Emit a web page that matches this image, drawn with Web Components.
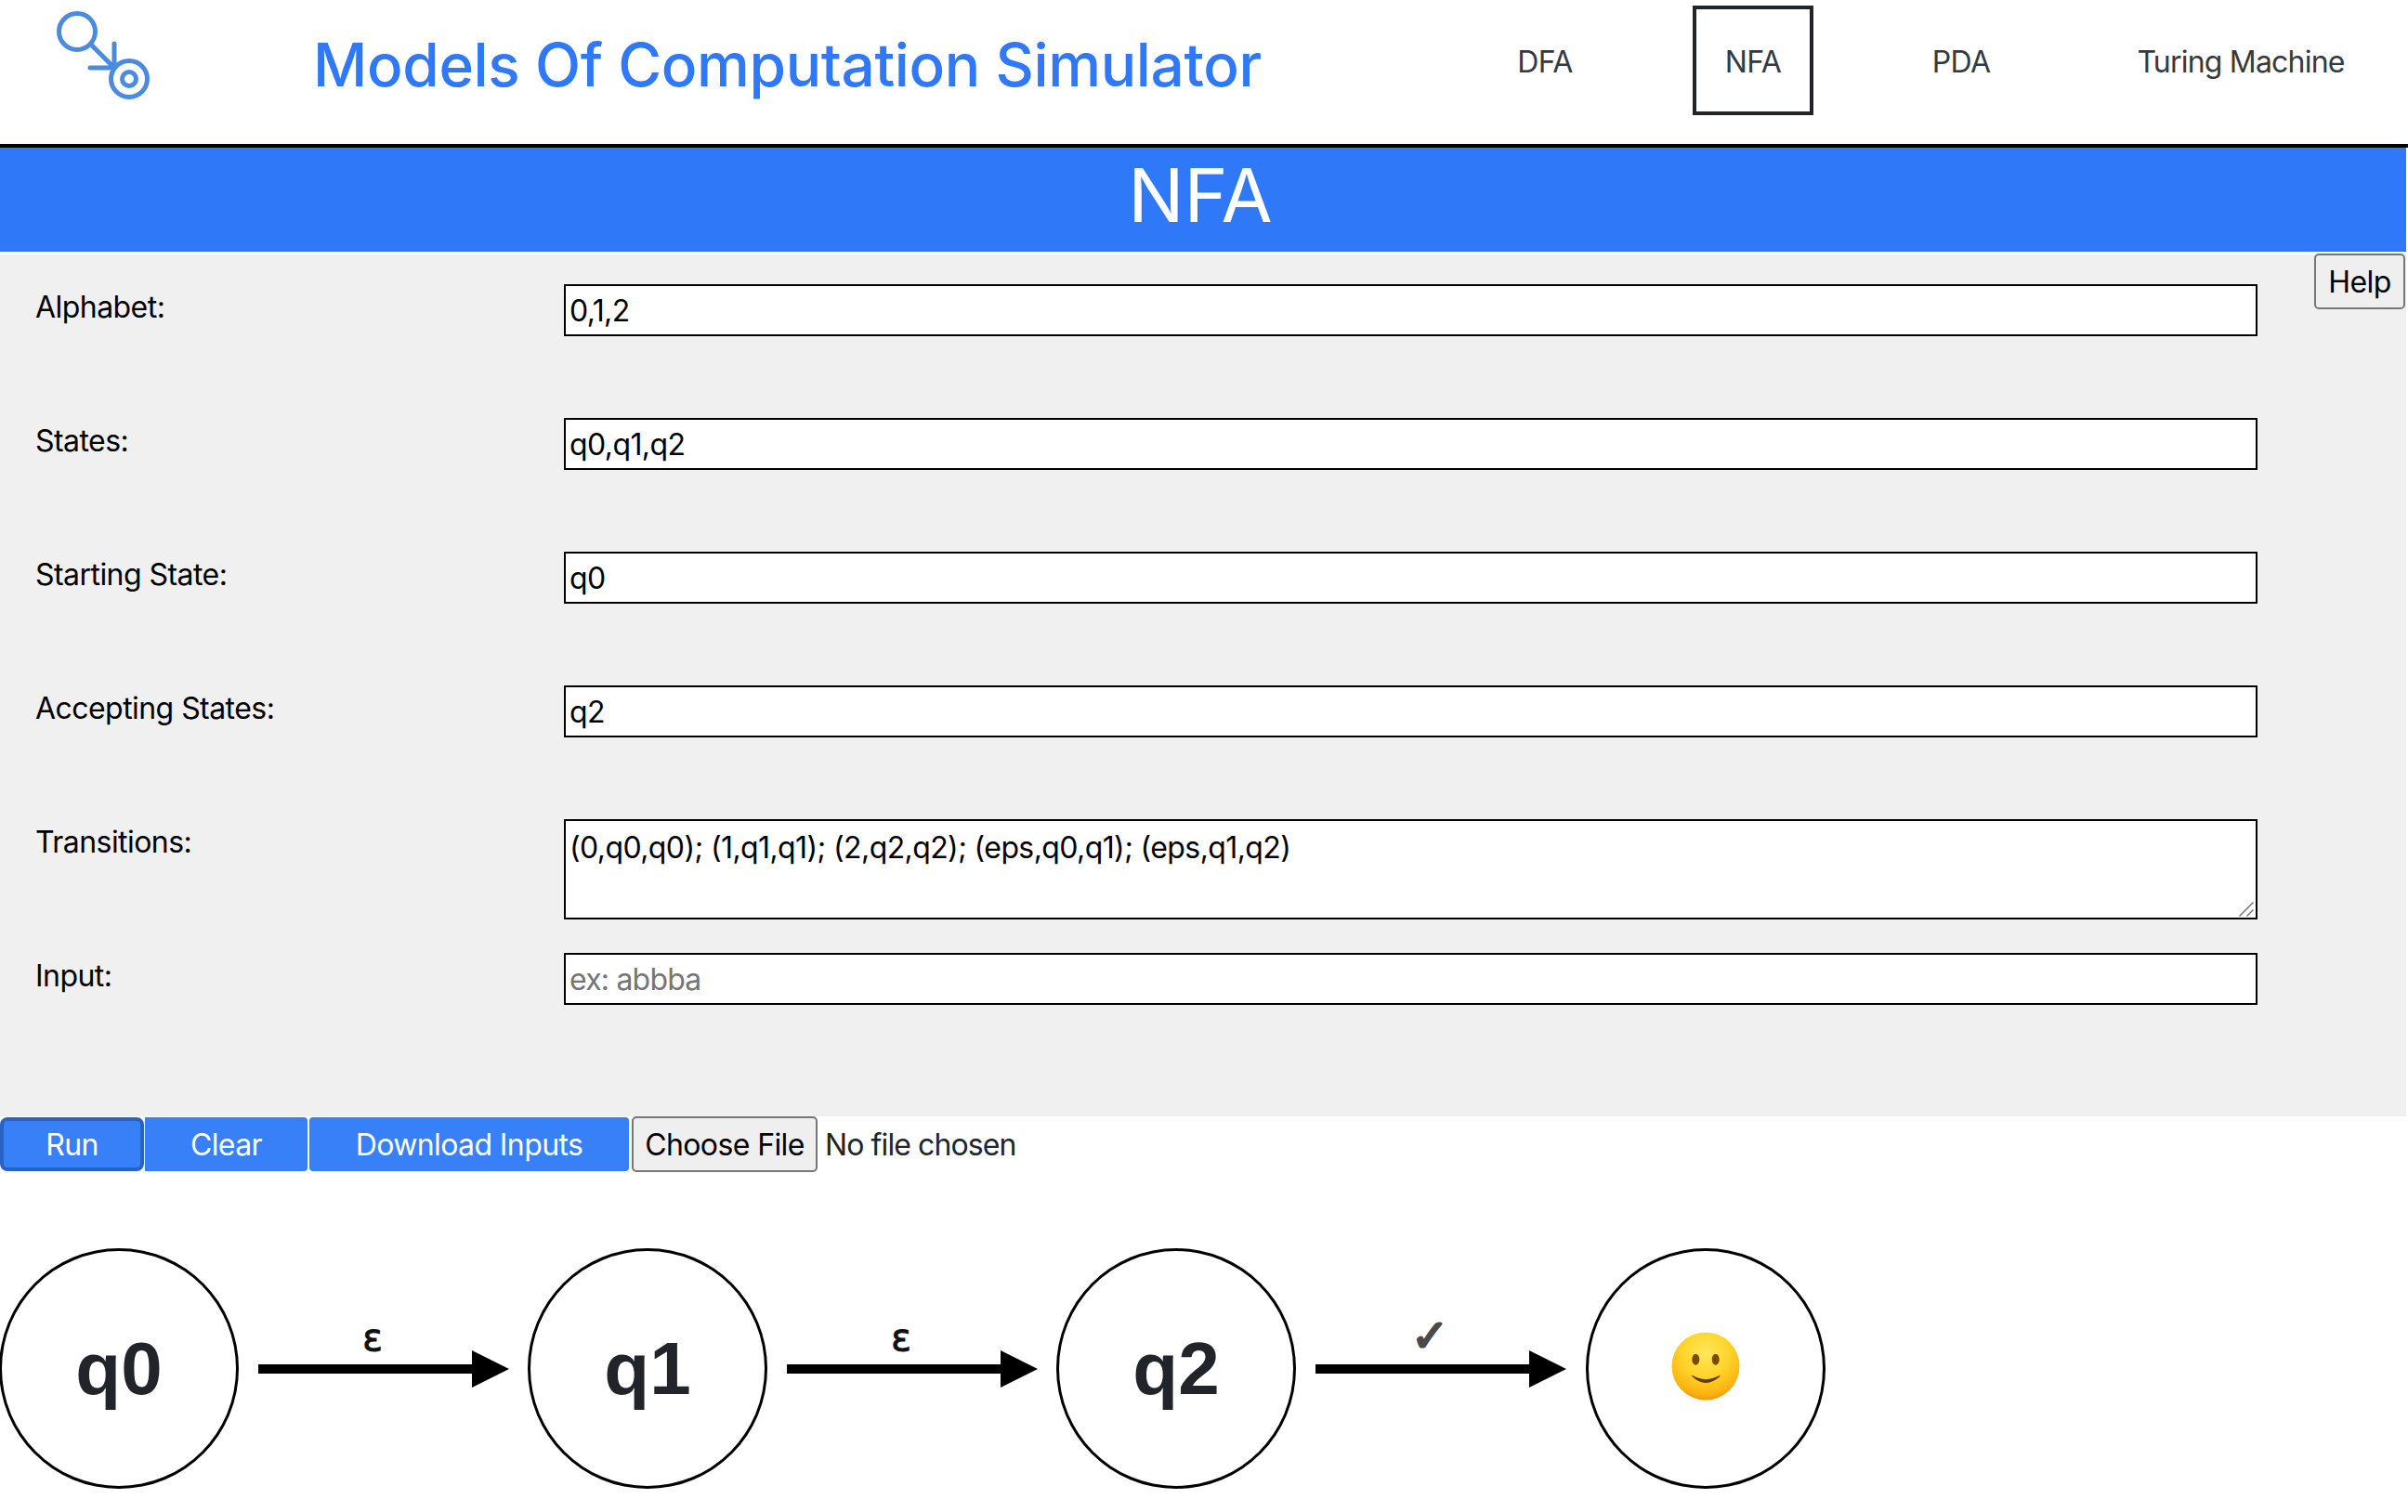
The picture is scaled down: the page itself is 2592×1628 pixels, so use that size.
<!DOCTYPE html>
<html lang="en">
<head>
<meta charset="utf-8">
<title>NFA</title>
<style>
  html, body { margin: 0; background: #fff; overflow: hidden; }
  body { font-family: Inter, "Noto Sans", sans-serif; color: #212529; }
</style>
</head>
<body>
<site-header></site-header>
<page-title>NFA</page-title>
<nfa-form>
  <form-field label="Alphabet:" value="0,1,2"></form-field>
  <form-field label="States:" value="q0,q1,q2"></form-field>
  <form-field label="Starting State:" value="q0"></form-field>
  <form-field label="Accepting States:" value="q2"></form-field>
  <form-field label="Transitions:" multiline value="(0,q0,q0); (1,q1,q1); (2,q2,q2); (eps,q0,q1); (eps,q1,q2)"></form-field>
  <form-field label="Input:" placeholder="ex: abbba"></form-field>
</nfa-form>
<action-bar></action-bar>
<nfa-diagram>
  <state-node>q0</state-node>
  <edge-arrow>ε</edge-arrow>
  <state-node>q1</state-node>
  <edge-arrow>ε</edge-arrow>
  <state-node>q2</state-node>
  <edge-arrow check>✓</edge-arrow>
  <state-node>
    <svg style="margin-bottom:6px" width="74" height="74" viewBox="0 0 74 74">
      <defs>
        <radialGradient id="face" cx="50%" cy="30%" r="75%">
          <stop offset="0" stop-color="#ffe65c"/>
          <stop offset="0.45" stop-color="#ffd52a"/>
          <stop offset="0.8" stop-color="#fdb512"/>
          <stop offset="1" stop-color="#ef8d06"/>
        </radialGradient>
      </defs>
      <circle cx="37" cy="37" r="36.5" fill="url(#face)"/>
      <ellipse cx="26.3" cy="29.7" rx="4" ry="6" fill="#7a4a08"/>
      <ellipse cx="47.7" cy="29.7" rx="4" ry="6" fill="#7a4a08"/>
      <path d="M22.7 47.6Q37 56 52 47.6Q37 61 22.7 47.6z" fill="#5e3a06" stroke="#5e3a06" stroke-width="1.2" stroke-linejoin="round"/>
    </svg>
  </state-node>
</nfa-diagram>

<script>
class SiteHeader extends HTMLElement {
  constructor() {
    super();
    this.attachShadow({ mode: "open" }).innerHTML = `
      <style>
        :host { display: flex; align-items: flex-start; height: 155px; border-bottom: 4px solid #000; }
        svg { flex: none; margin: 12px 0 0 58px; }
        h1 { margin: 32px 0 0 173px; font: 500 64px/1.2 Inter, sans-serif; letter-spacing: -0.4px; color: #2f78f7; white-space: nowrap; }
        nav { margin-left: auto; display: flex; align-items: flex-start; padding-top: 6px; gap: 94px; margin-right: 38px; }
        a { display: flex; flex: none; box-sizing: border-box; width: 130px; height: 118px; padding-top: 37px; justify-content: center;
            font-size: 32px; line-height: 40px; letter-spacing: -0.6px; white-space: nowrap; color: #343a40; text-decoration: none; border: 4px solid transparent; }
        a.active { border-color: #212529; }
        a.wide { width: 284px; letter-spacing: -0.8px; }
      </style>
      <svg width="106" height="98" viewBox="0 0 106 98" fill="none" stroke="#4a8be0" stroke-linecap="round">
        <circle cx="25" cy="22" r="19.5" stroke-width="5"/>
        <path d="M40 36l24 24M39 61h25M65 35v25" stroke-width="5"/>
        <circle cx="81" cy="73" r="19.5" stroke-width="5"/>
        <circle cx="81" cy="73" r="7.5" stroke-width="5"/>
      </svg>
      <h1>Models Of Computation Simulator</h1>
      <nav>
        <a href="#">DFA</a>
        <a href="#" class="active">NFA</a>
        <a href="#">PDA</a>
        <a href="#" class="wide">Turing Machine</a>
      </nav>`;
  }
}
customElements.define("site-header", SiteHeader);

class PageTitle extends HTMLElement {
  constructor() {
    super();
    this.attachShadow({ mode: "open" }).innerHTML = `
      <style>
        :host { display: block; box-sizing: border-box; width: 2590px; height: 112px; margin-bottom: 3px; padding-right: 6px; background: #2f78f7; color: #fff;
                text-align: center; font-size: 80px; line-height: 101px; }
      </style>
      <slot></slot>`;
  }
}
customElements.define("page-title", PageTitle);

const fieldStyle = `
  :host { display: flex; align-items: flex-start; }
  label { flex: none; box-sizing: border-box; width: 607px; padding: 5px 0 0 38px; font-size: 32px; line-height: 40px; letter-spacing: -0.55px; color: #000; }
  .wrap { position: relative; }
  .box { box-sizing: border-box; width: 1823px; height: 56px; margin: 0; padding: 0 4px; border: 2px solid #000;
         border-radius: 0; background: #fff; color: #000; font: 32px/40px Inter, sans-serif; letter-spacing: -0.6px; outline: 0; display: block; }
  textarea.box { height: 108px; padding-top: 9px; resize: none; }
  input::placeholder { color: #757575; opacity: 1; letter-spacing: -0.8px; }
  svg { position: absolute; right: 4px; bottom: 3px; }
`;

class FormField extends HTMLElement {
  constructor() {
    super();
    const root = this.attachShadow({ mode: "open" });
    const multi = this.hasAttribute("multiline");
    const value = this.getAttribute("value") || "";
    const place = this.getAttribute("placeholder") || "";
    root.innerHTML = `<style>${fieldStyle}</style><label>${this.getAttribute("label")}</label><div class="wrap">` +
      (multi ? `<textarea class="box">${value}</textarea>
                <svg width="16" height="16" viewBox="0 0 16 16" fill="none" stroke="#777" stroke-width="1.5"><path d="M0.5 15.5L15.5 0.5M8.5 15.5L15.5 8.5"/></svg>`
             : `<input class="box" value="${value}" placeholder="${place}">`) + `</div>`;
  }
}
customElements.define("form-field", FormField);

class NfaForm extends HTMLElement {
  constructor() {
    super();
    this.attachShadow({ mode: "open" }).innerHTML = `
      <style>
        :host { display: flex; justify-content: space-between; align-items: flex-start; box-sizing: border-box;
                width: 2590px; height: 928px; background: #f0f0f0; }
        .fields { display: flex; flex-direction: column; padding-top: 32px; }
        ::slotted(form-field) { margin-bottom: 88px; }
        ::slotted(form-field[multiline]) { margin-bottom: 36px; }
        button { box-sizing: border-box; width: 98px; height: 60px; margin: -1px 1px 0 0; padding: 0; font: 32px Inter, sans-serif; letter-spacing: -0.6px;
                 color: #000; background: #efefef; border: 2px solid #767676; border-radius: 5px; }
      </style>
      <div class="fields"><slot></slot></div>
      <button>Help</button>`;
  }
}
customElements.define("nfa-form", NfaForm);

class ActionBar extends HTMLElement {
  constructor() {
    super();
    this.attachShadow({ mode: "open" }).innerHTML = `
      <style>
        :host { display: flex; align-items: center; height: 60px; font-size: 32px; letter-spacing: -0.9px; }
        button { box-sizing: border-box; height: 58px; padding: 0; font: 32px Inter, sans-serif; letter-spacing: -0.6px;
                 color: #fff; background: #3880f8; border: 0; }
        .run { width: 155px; margin-right: 1px; border: 4px solid #2a62c4; border-radius: 8px; }
        .clear { width: 175px; margin-right: 2px; border-radius: 0 4px 4px 0; }
        .dl { width: 344px; margin-right: 3px; border-radius: 4px; }
        .file { width: 200px; height: 60px; color: #000; background: #efefef; border: 2px solid #767676; border-radius: 5px; margin-right: 8px; }
        span { color: #212529; white-space: nowrap; }
      </style>
      <button class="run">Run</button>
      <button class="clear">Clear</button>
      <button class="dl">Download Inputs</button>
      <button class="file">Choose File</button>
      <span>No file chosen</span>`;
  }
}
customElements.define("action-bar", ActionBar);

class NfaDiagram extends HTMLElement {
  constructor() {
    super();
    this.attachShadow({ mode: "open" }).innerHTML = `
      <style>
        :host { display: flex; align-items: center; margin: 82px 0 0 -1px; }
      </style>
      <slot></slot>`;
  }
}
customElements.define("nfa-diagram", NfaDiagram);

class StateNode extends HTMLElement {
  constructor() {
    super();
    this.attachShadow({ mode: "open" }).innerHTML = `
      <style>
        :host { flex: none; display: flex; align-items: center; justify-content: center; box-sizing: border-box;
                width: 258px; height: 259px; border: 3px solid #000; border-radius: 50%;
                font: 700 80px "Liberation Sans", Arial, sans-serif; color: #212529; }
      </style>
      <slot></slot>`;
  }
}
customElements.define("state-node", StateNode);

class EdgeArrow extends HTMLElement {
  constructor() {
    super();
    const check = this.hasAttribute("check");
    this.attachShadow({ mode: "open" }).innerHTML = `
      <style>
        :host { flex: none; display: block; position: relative; width: 270px; height: 40px; margin: 0 ${check ? 21 : 20}px 0 21px; }
        .label { position: absolute; left: 0; right: 24px; bottom: ${check ? 32 : 34}px; text-align: center;
                 font: ${check ? "700 48px/48px" : "400 40px/40px"} "DejaVu Sans", sans-serif; color: ${check ? "#4a4a4a" : "#111"};
                 -webkit-text-stroke: ${check ? 2.5 : 1}px currentColor; }
        svg { display: block; }
      </style>
      <div class="label"><slot></slot></div>
      <svg width="270" height="40" viewBox="0 0 270 40"><path d="M0 15h230V0l40 20-40 20V25H0z" fill="#000"/></svg>`;
  }
}
customElements.define("edge-arrow", EdgeArrow);
</script>
</body>
</html>
